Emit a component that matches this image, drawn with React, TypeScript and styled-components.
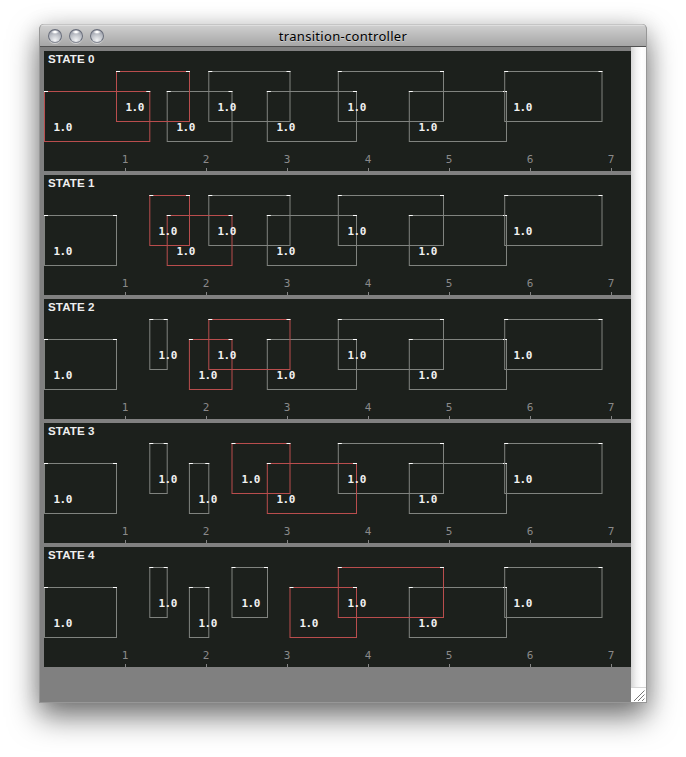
import React from "react";
import styled, { createGlobalStyle } from "styled-components";

const GlobalStyle = createGlobalStyle`
  body { margin: 0; background: #fff; overflow: hidden; }
`;

const Desktop = styled.main`
  box-sizing: border-box;
  width: 686px;
  height: 757px;
  padding: 24px 39px 0;
  background: #fff;
`;

const Window = styled.section`
  box-sizing: border-box;
  display: flex;
  flex-direction: column;
  width: 608px;
  height: 679px;
  border: 1px solid #979797;
  border-top: 0;
  border-radius: 5px 5px 0 0;
  box-shadow: 0 14px 30px rgba(0, 0, 0, 0.52), 0 2px 22px rgba(0, 0, 0, 0.14);
  overflow: hidden;
  background: #808080;
`;

const TitleBar = styled.header`
  box-sizing: border-box;
  display: grid;
  grid-template-columns: 80px 1fr 80px;
  align-items: center;
  flex: none;
  height: 23px;
  border-bottom: 1px solid #515151;
  background: linear-gradient(#c5c5c5 0 1px, #dedede 1px 2px, #cecece 2px, #a6a6a6 100%);
`;

const Lights = styled.div`
  display: flex;
  gap: 7px;
  padding: 2px 0 0 8px;
`;

const Light = styled.i`
  box-sizing: border-box;
  width: 14px;
  height: 14px;
  border: 1px solid #696e7b;
  border-bottom-color: #858994;
  border-radius: 50%;
  background: radial-gradient(ellipse 4px 2px at 50% 2px, #fff 0 30%, transparent 100%),
    radial-gradient(circle at 50% 85%, #f2f3f5 0, #c3c6cc 45%, #858a98 100%);
  box-shadow: 0 1px 0 rgba(255, 255, 255, 0.45);
`;

const Title = styled.h1`
  margin: 0;
  padding-top: 2px;
  color: #000;
  font: 400 13px/18px "Noto Sans", sans-serif;
  letter-spacing: 0.3px;
  text-align: center;
  white-space: nowrap;
  text-shadow: 0 1px 0 rgba(255, 255, 255, 0.35);
`;

const Content = styled.div`
  display: flex;
  flex: 1;
  min-height: 0;
`;

const States = styled.div`
  display: flex;
  flex-direction: column;
  gap: 4px;
  width: 591px;
  box-sizing: border-box;
  padding: 4px 0 0 4px;
  background: #808080;
`;

const ScrollTrack = styled.aside`
  display: flex;
  flex-direction: column;
  justify-content: flex-end;
  width: 15px;
  background: linear-gradient(90deg, #d6d6d6, #f2f2f2 35%, #fff 70%, #fafafa);
`;

const Grip = styled.svg`
  display: block;
  box-sizing: border-box;
  width: 15px;
  height: 15px;
  border-top: 1px solid #d5d5d5;
  background: #fff;
`;

const Timeline = styled.svg`
  display: block;
  flex: none;
  width: 587px;
  height: 120px;
  background: #1c201c;
`;

const StateLabel = styled.text`
  fill: #eee;
  font: 700 11.6px "Liberation Sans", sans-serif;
`;

const Value = styled.text`
  fill: #f1f1f1;
  font: 700 11px "DejaVu Sans Mono", monospace;
  letter-spacing: -0.5px;
`;

const AxisLabel = styled.text`
  fill: #8a8a8a;
  font: 400 11px "DejaVu Sans Mono", monospace;
  text-anchor: middle;
`;

const Outline = styled.rect<{ $active?: boolean }>`
  fill: none;
  stroke: ${(p) => (p.$active ? "#b94d4d" : "#80837f")};
  stroke-width: 1;
`;

type Span = { from: number; to: number; row: 0 | 1; active?: boolean };

const low = (from: number, to: number, active = false): Span => ({ from, to, row: 1, active });
const high = (from: number, to: number, active = false): Span => ({ from, to, row: 0, active });

const states: Span[][] = [
  [
    low(0.5, 105.8, true), high(72.5, 145.5, true), low(123.2, 188), high(164.8, 246),
    low(223.3, 312.5), high(294.3, 399.5), low(365.3, 462.5), high(460.7, 558),
  ],
  [
    low(0.5, 72.5), high(105.8, 145.5, true), low(123.2, 188, true), high(164.8, 246),
    low(223.3, 312.5), high(294.3, 399.5), low(365.3, 462.5), high(460.7, 558),
  ],
  [
    low(0.5, 72.5), high(105.8, 123.2), low(145.4, 188, true), high(164.8, 246, true),
    low(223.3, 312.5), high(294.3, 399.5), low(365.3, 462.5), high(460.7, 558),
  ],
  [
    low(0.5, 72.5), high(105.8, 123.2), low(145.4, 164.8), high(188, 246, true),
    low(223.3, 312.5, true), high(294.3, 399.5), low(365.3, 462.5), high(460.7, 558),
  ],
  [
    low(0.5, 72.5), high(105.8, 123.2), low(145.4, 164.8), high(188, 223.5),
    low(246, 312.5, true), high(294.3, 399.5, true), low(365.3, 462.5), high(460.7, 558),
  ],
];

const SECONDS = [1, 2, 3, 4, 5, 6, 7];

function StateTimeline({ index, spans }: { index: number; spans: Span[] }) {
  const ordered = [...spans].sort((a, b) => Number(a.active) - Number(b.active));
  return (
    <Timeline viewBox="0 0 587 120">
      <StateLabel x="4" y="12" textLength="46.5">{`STATE ${index}`}</StateLabel>
      {ordered.map((s) => {
        const top = s.row ? 40.5 : 20.5;
        return (
          <g key={`${s.from}-${s.row}`}>
            <Outline $active={s.active} x={s.from} y={top} width={s.to - s.from} height={50} />
            <path
              d={`M${s.from - 0.5} ${top}h4M${s.to - 3.5} ${top}h4`}
              stroke="#fff"
              strokeWidth="1"
            />
          </g>
        );
      })}
      {spans.map((s) => (
        <Value key={`${s.from}-${s.row}`} x={Math.floor(s.from) + 9.5} y={s.row ? 80 : 60}>
          1.0
        </Value>
      ))}
      {SECONDS.map((n) => (
        <g key={n}>
          <AxisLabel x={n * 81} y="112">{n}</AxisLabel>
          <path d={`M${n * 81 + 0.5} 117v3`} stroke="#858585" />
        </g>
      ))}
    </Timeline>
  );
}

export default function App() {
  return (
    <>
      <GlobalStyle />
      <Desktop>
        <Window>
          <TitleBar>
            <Lights>
              <Light />
              <Light />
              <Light />
            </Lights>
            <Title>transition-controller</Title>
          </TitleBar>
          <Content>
            <States>
              {states.map((spans, i) => (
                <StateTimeline key={i} index={i} spans={spans} />
              ))}
            </States>
            <ScrollTrack>
              <Grip viewBox="0 0 15 14">
                <path d="M3 13 13.5 2.5M7 13 13.5 6.5M11 13l2.5-2.5" stroke="#777" fill="none" />
              </Grip>
            </ScrollTrack>
          </Content>
        </Window>
      </Desktop>
    </>
  );
}
